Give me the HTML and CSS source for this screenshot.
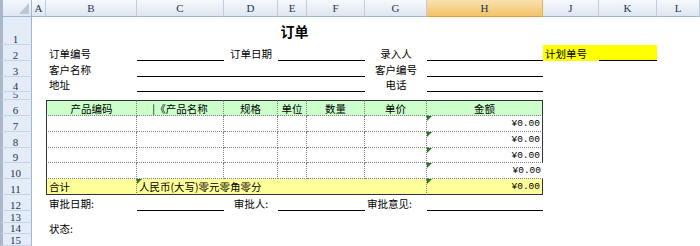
FILE: index.html
```html
<!DOCTYPE html>
<html lang="zh-CN">
<head>
  <meta charset="UTF-8">
  <title>订单</title>
  <link rel="stylesheet" href="styles.css">
</head>
<body>

  <div class="sheet">

    <!-- Column headers -->
    <div class="line head">
      <div class="corner"></div>
      <div class="col">A</div>
      <div class="col">B</div>
      <div class="col">C</div>
      <div class="col">D</div>
      <div class="col">E</div>
      <div class="col">F</div>
      <div class="col">G</div>
      <div class="col active">H</div>
      <div class="col">J</div>
      <div class="col">K</div>
      <div class="col">L</div>
    </div>

    <!-- Title -->
    <div class="line h28">
      <div class="rn">1</div>
      <div></div>
      <div class="cell title span7">订单</div>
    </div>

    <!-- Order info -->
    <div class="line">
      <div class="rn">2</div>
      <div></div>
      <div class="cell">订单编号</div>
      <div class="cell blank"></div>
      <div class="cell center">订单日期</div>
      <div class="cell blank span2"></div>
      <div class="cell center">录入人</div>
      <div class="cell blank"></div>
      <div class="cell plan">计划单号</div>
      <div class="cell blank plan"></div>
    </div>

    <div class="line">
      <div class="rn">3</div>
      <div></div>
      <div class="cell">客户名称</div>
      <div class="cell blank span4"></div>
      <div class="cell center">客户编号</div>
      <div class="cell blank"></div>
    </div>

    <div class="line h15">
      <div class="rn">4</div>
      <div></div>
      <div class="cell">地址</div>
      <div class="cell blank span4"></div>
      <div class="cell center">电话</div>
      <div class="cell blank"></div>
    </div>

    <div class="line h8">
      <div class="rn">5</div>
    </div>

    <!-- Product table -->
    <div class="line">
      <div class="rn">6</div>
      <div></div>
      <div class="cell tc th first">产品编码</div>
      <div class="cell tc th">|《产品名称</div>
      <div class="cell tc th">规格</div>
      <div class="cell tc th">单位</div>
      <div class="cell tc th">数量</div>
      <div class="cell tc th">单价</div>
      <div class="cell tc th last">金额</div>
    </div>

    <div class="line">
      <div class="rn">7</div>
      <div></div>
      <div class="cell tc first"></div>
      <div class="cell tc"></div>
      <div class="cell tc"></div>
      <div class="cell tc"></div>
      <div class="cell tc"></div>
      <div class="cell tc"></div>
      <div class="cell tc last money flag">¥0.00</div>
    </div>

    <div class="line">
      <div class="rn">8</div>
      <div></div>
      <div class="cell tc first"></div>
      <div class="cell tc"></div>
      <div class="cell tc"></div>
      <div class="cell tc"></div>
      <div class="cell tc"></div>
      <div class="cell tc"></div>
      <div class="cell tc last money flag">¥0.00</div>
    </div>

    <div class="line h15">
      <div class="rn">9</div>
      <div></div>
      <div class="cell tc first"></div>
      <div class="cell tc"></div>
      <div class="cell tc"></div>
      <div class="cell tc"></div>
      <div class="cell tc"></div>
      <div class="cell tc"></div>
      <div class="cell tc last money flag">¥0.00</div>
    </div>

    <div class="line">
      <div class="rn">10</div>
      <div></div>
      <div class="cell tc first"></div>
      <div class="cell tc"></div>
      <div class="cell tc"></div>
      <div class="cell tc"></div>
      <div class="cell tc"></div>
      <div class="cell tc"></div>
      <div class="cell tc money flag open">¥0.00</div>
    </div>

    <div class="line">
      <div class="rn">11</div>
      <div></div>
      <div class="cell tc total first">合计</div>
      <div class="cell tc total span5 flag">人民币(大写)零元零角零分</div>
      <div class="cell tc total last money flag">¥0.00</div>
    </div>

    <!-- Approval -->
    <div class="line">
      <div class="rn">12</div>
      <div></div>
      <div class="cell">审批日期:</div>
      <div class="cell blank"></div>
      <div class="cell center">审批人:</div>
      <div class="cell blank span2"></div>
      <div class="cell tight">审批意见:</div>
      <div class="cell blank"></div>
    </div>

    <div class="line h12">
      <div class="rn">13</div>
    </div>

    <div class="line h11">
      <div class="rn">14</div>
      <div></div>
      <div class="cell spill">状态:</div>
    </div>

    <div class="line h12">
      <div class="rn">15</div>
    </div>

  </div>

</body>
</html>
```

FILE: styles.css
```css
/* Page */
body {
  margin: 0;
  background-color: #fff;
  font-family: "Noto Sans CJK SC", "Noto Sans", sans-serif;
  font-size: 10.5px;
  color: #000;
}

.sheet {
  width: 700px;
  height: 246px;
  overflow: hidden;
}

/* Every sheet row shares the same column widths */
.line {
  display: grid;
  grid-template-columns: 32px 14px 91px 87px 54px 29px 58px 62px 116px 56px 58px 1fr;
  height: 16px;
}

.h28 { height: 28px; }
.h15 { height: 15px; }
.h12 { height: 12px; }
.h11 { height: 11px; }
.h8 { height: 8px; }

/* Column header bar */
.head {
  height: 17px;
}

.corner {
  position: relative;
  background: linear-gradient(#f4f7fb, #dfe7f2);
  border-right: 1px solid #9eb6ce;
  border-bottom: 1px solid #9eb6ce;
  border-left: 3px solid #a9b7c9;
}

.corner::after {
  content: "";
  position: absolute;
  right: 2px;
  bottom: 2px;
  border-left: 10px solid transparent;
  border-bottom: 11px solid #b9c7d9;
}

.col {
  display: flex;
  align-items: center;
  justify-content: center;
  background: linear-gradient(#f6f9fc, #dde6f1);
  border-right: 1px solid #c0cfe0;
  border-bottom: 1px solid #9eb6ce;
  font-family: "Liberation Serif", serif;
  font-size: 11px;
  color: #1f3550;
}

.col.active {
  background: linear-gradient(#fae0ad, #f2c36a);
  border-right-color: #e9ae59;
  border-bottom-color: #f29536;
}

/* Row numbers */
.rn {
  display: flex;
  align-items: flex-end;
  justify-content: center;
  overflow: hidden;
  background-color: #e4ecf7;
  border-left: 3px solid #a9b7c9;
  border-right: 1px solid #9eb6ce;
  border-bottom: 1px solid #c5d3e4;
  padding-right: 3px;
  font-family: "Liberation Serif", serif;
  font-size: 11px;
  line-height: 10px;
  color: #1f3550;
}

/* Cells */
.cell {
  display: flex;
  align-items: center;
  overflow: hidden;
  white-space: nowrap;
  padding-left: 3px;
  line-height: 11px;
}

.spill {
  overflow: visible;
}

.center {
  justify-content: center;
  padding-left: 0;
}

.tight {
  padding-left: 2px;
}

.span2 { grid-column: span 2; }
.span4 { grid-column: span 4; }
.span5 { grid-column: span 5; }
.span7 { grid-column: span 7; }

.title {
  justify-content: center;
  padding-left: 0;
  font-size: 14px;
  font-weight: bold;
  line-height: 16px;
}

.blank {
  border-bottom: 1px solid #000;
}

.plan {
  background-color: #ffff00;
  padding-left: 2px;
}

/* Product table */
.tc {
  position: relative;
  border-right: 1px dotted #808080;
  border-bottom: 1px dotted #808080;
  padding-left: 2px;
}

.th {
  justify-content: center;
  padding-left: 0;
  background-color: #ccffcc;
  border-top: 1px solid #333;
}

.first {
  border-left: 1px solid #333;
}

.last {
  border-right: 1px solid #333;
}

.open {
  border-right: none;
}

.money {
  justify-content: flex-end;
  padding-right: 2px;
  font-family: "Liberation Mono", monospace;
  font-size: 9.5px;
}

.total {
  background-color: #ffff99;
  border-bottom: 1px solid #333;
}

/* Green error marker in the corner of a cell */
.flag::before {
  content: "";
  position: absolute;
  top: 0;
  left: 0;
  border-top: 5px solid #1e7b1e;
  border-right: 5px solid transparent;
}
```
